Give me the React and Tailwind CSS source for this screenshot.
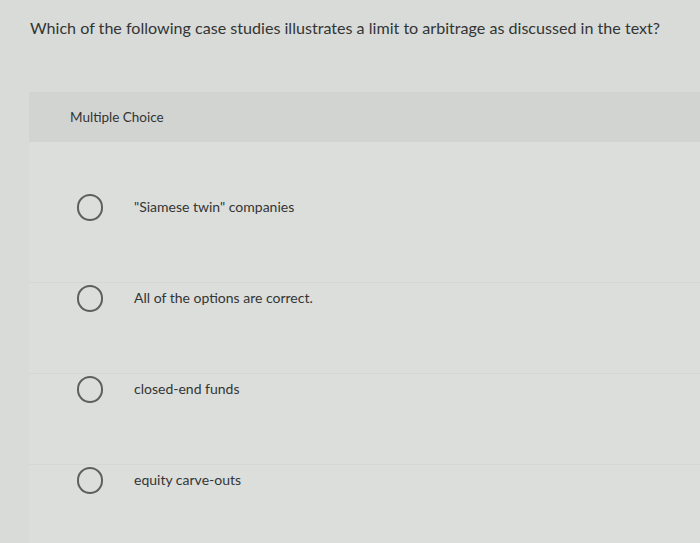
export default function App() {
  const options = [
    '"Siamese twin" companies',
    'All of the options are correct.',
    'closed-end funds',
    'equity carve-outs',
  ];

  return (
    <div className="w-[700px] h-[543px] overflow-hidden bg-[#d9dbd8] text-[#333534] font-['Lato',sans-serif]">
      <div className="pl-[30px] pt-[17px] text-[16.1px] leading-[22px]">
        Which of the following case studies illustrates a limit to arbitrage as discussed in the text?
      </div>

      <div className="ml-[29px] mt-[53px] bg-[#dcdedb] h-[460px]">
        {/* Header band */}
        <div className="h-[50px] bg-[#d2d4d1] pl-[41px] pt-[16px] text-[13.5px] leading-[18px]">
          Multiple Choice
        </div>

        <div className="pt-[50px]">
          {options.map((label) => (
            <div key={label} className="h-[91px] flex items-start border-b border-[#d5d7d4] last:border-b-0">
              <div className="flex items-center h-[32px] -mt-[1px]">
                <span className="ml-[48px] w-[26px] h-[27px] rounded-full border-2 border-[#5d605f] shrink-0" />
                <span className="ml-[31px] text-[14px] leading-[18px]">{label}</span>
              </div>
            </div>
          ))}
        </div>
      </div>
    </div>
  );
}
